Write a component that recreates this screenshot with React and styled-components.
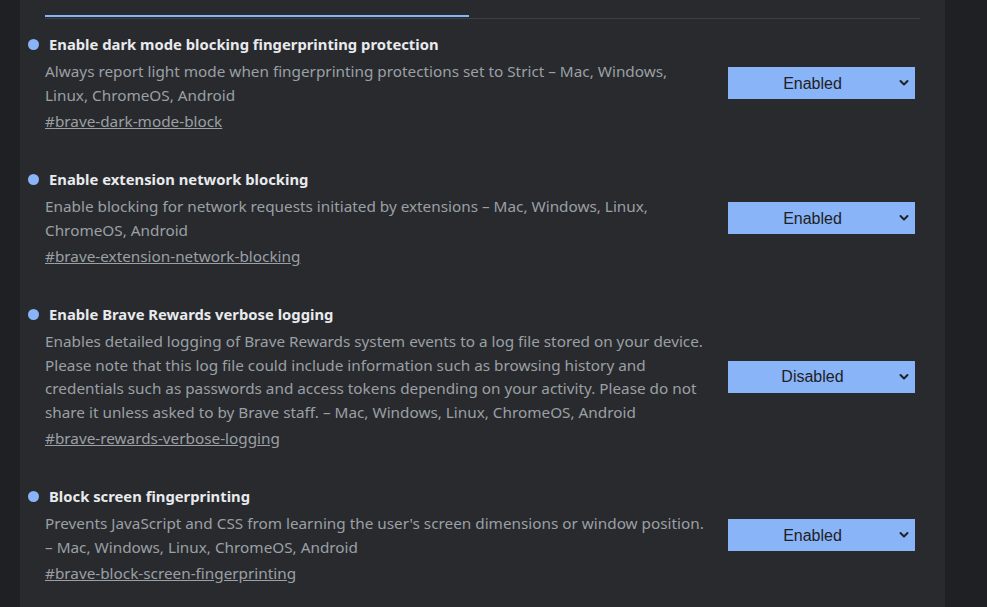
import React from 'react';
import styled, { createGlobalStyle } from 'styled-components';

const colors = {
  pageBg: '#1f2023',
  panelBg: '#292a2d',
  title: '#e8eaed',
  text: '#9aa0a6',
  accent: '#8ab4f8',
  divider: '#3c4043',
  selectText: '#202124',
};

const GlobalStyle = createGlobalStyle`
  html, body {
    margin: 0;
    padding: 0;
    background: ${colors.pageBg};
    height: 100%;
    overflow: hidden;
  }
  body {
    font-family: "Noto Sans", "Open Sans", sans-serif;
  }
`;

const Page = styled.div`
  display: flex;
  height: 607px;
  padding-left: 20px;
`;

const Panel = styled.main`
  width: 925px;
  background: ${colors.panelBg};
  padding: 0 25px;
  box-sizing: border-box;
`;

const TabBar = styled.div`
  display: flex;
  align-items: flex-end;
  height: 18px;
  border-bottom: 1px solid ${colors.divider};
`;

const ActiveTabLine = styled.div`
  width: 424px;
  height: 2px;
  background: ${colors.accent};
  margin-bottom: 1px;
`;

const List = styled.div`
  display: flex;
  flex-direction: column;
  gap: 37px;
  padding-top: 15px;
`;

const Row = styled.section`
  display: flex;
  align-items: center;
  justify-content: space-between;
  padding-right: 5px;
`;

const Info = styled.div`
  width: 668px;
`;

const TitleRow = styled.h2`
  display: flex;
  align-items: center;
  gap: 10px;
  margin: 0 0 6px -17px;
  font-size: 14.8px;
  font-weight: 700;
  line-height: 20px;
  color: ${colors.title};
`;

const Bullet = styled.span`
  width: 11px;
  height: 11px;
  border-radius: 50%;
  background: ${colors.accent};
  flex-shrink: 0;
`;

const Description = styled.p`
  margin: 0;
  font-size: 15.3px;
  line-height: 23.5px;
  color: ${colors.text};
`;

const Permalink = styled.a`
  display: inline-block;
  margin-top: 3px;
  font-size: 15.3px;
  line-height: 22px;
  color: ${colors.text};
  text-decoration: underline;
`;

const SelectWrap = styled.div`
  position: relative;
  width: 187px;
  height: 32px;
`;

const Select = styled.select`
  appearance: none;
  width: 100%;
  height: 100%;
  border: none;
  border-radius: 0;
  background: ${colors.accent};
  color: ${colors.selectText};
  font-family: "Liberation Sans", Arial, sans-serif;
  font-size: 16px;
  text-align: center;
  text-align-last: center;
  padding: 0 18px 0 0;
  outline: none;
`;

const Chevron = styled.svg`
  position: absolute;
  right: 5px;
  top: 11px;
  pointer-events: none;
`;

const experiments = [
  {
    title: 'Enable dark mode blocking fingerprinting protection',
    desc: 'Always report light mode when fingerprinting protections set to Strict – Mac, Windows, Linux, ChromeOS, Android',
    link: 'brave-dark-mode-block',
    value: 'Enabled',
  },
  {
    title: 'Enable extension network blocking',
    desc: 'Enable blocking for network requests initiated by extensions – Mac, Windows, Linux, ChromeOS, Android',
    link: 'brave-extension-network-blocking',
    value: 'Enabled',
  },
  {
    title: 'Enable Brave Rewards verbose logging',
    desc: 'Enables detailed logging of Brave Rewards system events to a log file stored on your device. Please note that this log file could include information such as browsing history and credentials such as passwords and access tokens depending on your activity. Please do not share it unless asked to by Brave staff. – Mac, Windows, Linux, ChromeOS, Android',
    link: 'brave-rewards-verbose-logging',
    value: 'Disabled',
  },
  {
    title: 'Block screen fingerprinting',
    desc: "Prevents JavaScript and CSS from learning the user's screen dimensions or window position. – Mac, Windows, Linux, ChromeOS, Android",
    link: 'brave-block-screen-fingerprinting',
    value: 'Enabled',
  },
];

function StateSelect({ value }) {
  return (
    <SelectWrap>
      <Select defaultValue={value}>
        <option>Default</option>
        <option>Enabled</option>
        <option>Disabled</option>
      </Select>
      <Chevron width="12" height="10" viewBox="0 0 12 10">
        <path d="M2.5 3l3.5 3.5 3.5-3.5" fill="none" stroke={colors.selectText} strokeWidth="2" strokeLinecap="round" strokeLinejoin="round" />
      </Chevron>
    </SelectWrap>
  );
}

export default function App() {
  return (
    <>
      <GlobalStyle />
      <Page>
        <Panel>
          <TabBar>
            <ActiveTabLine />
          </TabBar>
          <List>
            {experiments.map(exp => (
              <Row key={exp.link}>
                <Info>
                  <TitleRow>
                    <Bullet />
                    {exp.title}
                  </TitleRow>
                  <Description>{exp.desc}</Description>
                  <Permalink href={`#${exp.link}`}>#{exp.link}</Permalink>
                </Info>
                <StateSelect value={exp.value} />
              </Row>
            ))}
          </List>
        </Panel>
      </Page>
    </>
  );
}
